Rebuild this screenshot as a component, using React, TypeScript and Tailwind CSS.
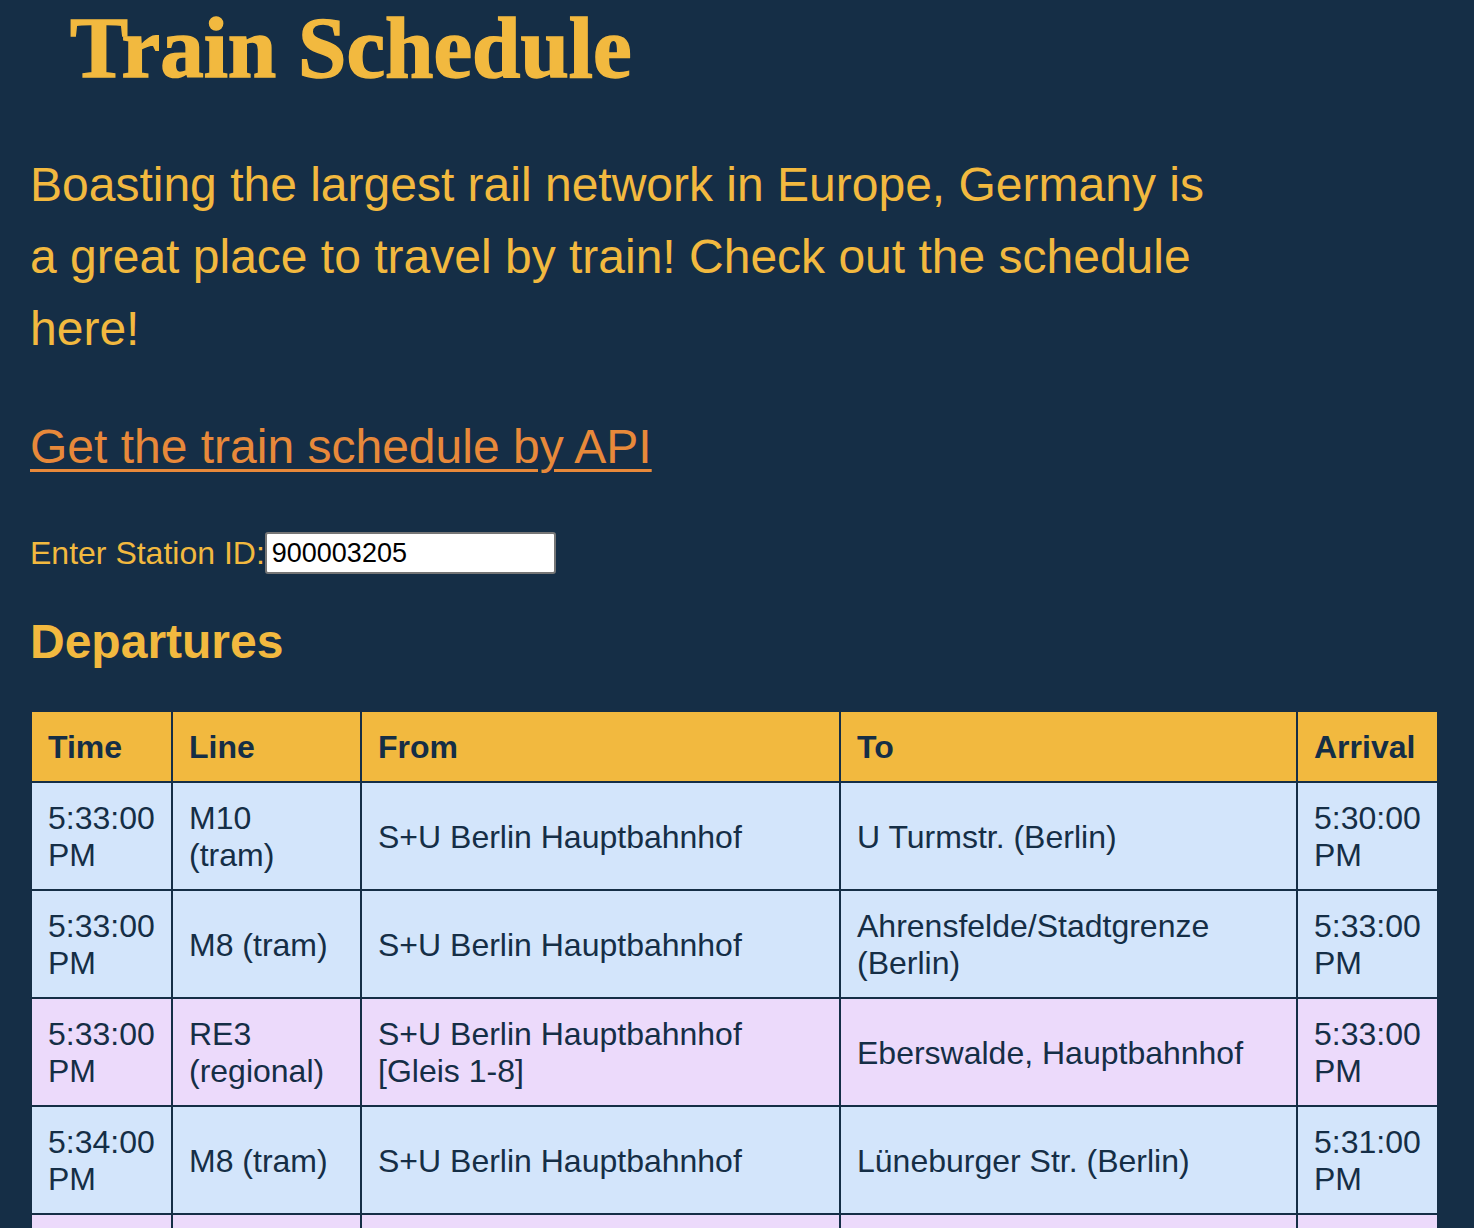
import React from "react"

type Departure = {
  time: string
  line: string
  from: string
  to: string
  arrival: string
  regional?: boolean
}

const DEPARTURES: Departure[] = [
  {
    time: "5:33:00 PM",
    line: "M10 (tram)",
    from: "S+U Berlin Hauptbahnhof",
    to: "U Turmstr. (Berlin)",
    arrival: "5:30:00 PM",
  },
  {
    time: "5:33:00 PM",
    line: "M8 (tram)",
    from: "S+U Berlin Hauptbahnhof",
    to: "Ahrensfelde/Stadtgrenze (Berlin)",
    arrival: "5:33:00 PM",
  },
  {
    time: "5:33:00 PM",
    line: "RE3 (regional)",
    from: "S+U Berlin Hauptbahnhof [Gleis 1-8]",
    to: "Eberswalde, Hauptbahnhof",
    arrival: "5:33:00 PM",
    regional: true,
  },
  {
    time: "5:34:00 PM",
    line: "M8 (tram)",
    from: "S+U Berlin Hauptbahnhof",
    to: "Lüneburger Str. (Berlin)",
    arrival: "5:31:00 PM",
  },
  {
    time: "5:35:00 PM",
    line: "RE1 (regional)",
    from: "S+U Berlin Hauptbahnhof [Gleis 11-16]",
    to: "Frankfurt (Oder), Bahnhof",
    arrival: "5:35:00 PM",
    regional: true,
  },
]

const cell = "border-2 border-[#152e46] px-4 pt-[17px] pb-[15px] align-middle text-left"

export default function App() {
  return (
    <div className="min-h-screen bg-[#152e46] px-[30px] pb-10 text-[#f2b93f] font-['Liberation_Sans',Arial,Helvetica,sans-serif]">
      <h1 className="ml-[40px] pt-[5px] text-[87px] leading-[86px] font-bold font-['Liberation_Serif','Times_New_Roman',serif] [-webkit-text-stroke:1.5px_#f2b93f]">
        Train Schedule
      </h1>

      <p className="mt-[58px] max-w-[1190px] text-[48px] leading-[72px]">
        Boasting the largest rail network in Europe, Germany is a great place to travel by train! Check out the
        schedule here!
      </p>

      <a href="#" className="mt-[54px] block w-fit text-[48px] leading-[56px] text-[#e8893a] underline decoration-[3px] underline-offset-[6px]">
        Get the train schedule by API
      </a>

      <div className="mt-[57px] flex h-[42px] items-center">
        <label htmlFor="station" className="text-[32px] leading-none">
          Enter Station ID:
        </label>
        <input
          id="station"
          defaultValue="900003205"
          className="ml-0 h-[42px] w-[291px] rounded-[3px] border-2 border-[#767676] bg-white px-[5px] text-[27px] text-black outline-none"
        />
      </div>

      <h2 className="mt-[40px] text-[48px] leading-[56px] font-bold">Departures</h2>

      <table className="mt-[40px] w-[1407px] table-fixed border-collapse text-[32px] leading-[37px] text-[#152e46]">
        <colgroup>
          <col className="w-[141px]" />
          <col className="w-[189px]" />
          <col className="w-[479px]" />
          <col className="w-[457px]" />
          <col className="w-[141px]" />
        </colgroup>
        <thead>
          <tr className="bg-[#f2b93f]">
            <th className={`${cell} font-bold`}>Time</th>
            <th className={`${cell} font-bold`}>Line</th>
            <th className={`${cell} font-bold`}>From</th>
            <th className={`${cell} font-bold`}>To</th>
            <th className={`${cell} font-bold`}>Arrival</th>
          </tr>
        </thead>
        <tbody>
          {DEPARTURES.map((d, i) => (
            <tr key={i} className={d.regional ? "bg-[#ecdafb]" : "bg-[#d3e5fb]"}>
              <td className={cell}>{d.time}</td>
              <td className={cell}>{d.line}</td>
              <td className={cell}>{d.from}</td>
              <td className={cell}>{d.to}</td>
              <td className={cell}>{d.arrival}</td>
            </tr>
          ))}
        </tbody>
      </table>
    </div>
  )
}
